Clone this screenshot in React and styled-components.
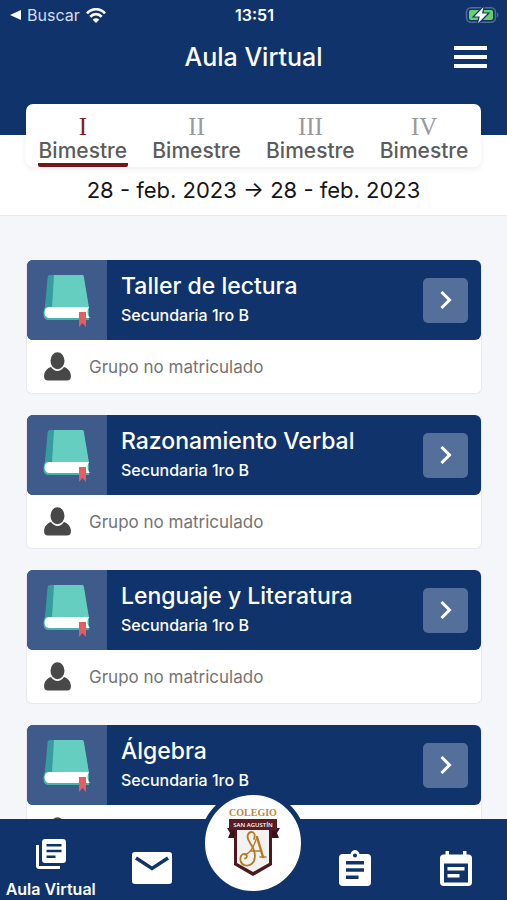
import React, { useState } from "react";
import styled, { createGlobalStyle, ThemeProvider } from "styled-components";

const theme = {
  navy: "#11336b",
  navySoft: "#3f5b8c",
  button: "#536f9a",
  maroon: "#701a20",
  ink: "#161616",
  grey: "#5c5c5c",
  page: "#f4f6fa",
  line: "#e6e9ee",
};

const GlobalStyle = createGlobalStyle`
  *, *::before, *::after { box-sizing: border-box; }
  body { margin: 0; font-family: Inter, "Liberation Sans", sans-serif; }
  button { font: inherit; border: 0; background: none; padding: 0; cursor: pointer; }
  h1, h2, p { margin: 0; font-weight: 500; }
  svg { display: block; flex: none; }
`;

const Screen = styled.div`
  display: flex;
  flex-direction: column;
  height: 100vh;
  background: ${(p) => p.theme.page};
`;

const Header = styled.header`
  flex: none;
  height: 135px;
  color: #fff;
  background: ${(p) => p.theme.navy};
`;

const StatusBar = styled.div`
  display: grid;
  grid-template-columns: 1fr auto 1fr;
  align-items: center;
  height: 30px;
  padding: 0 8px 0 10px;
  font-size: 16px;
  line-height: 20px;
`;

const BackLink = styled.a`
  display: flex;
  align-items: center;
  gap: 6px;
  color: #d5dded;
  text-decoration: none;
`;

const Clock = styled.time`
  font-weight: 600;
`;

const BatterySlot = styled.div`
  display: flex;
  justify-content: flex-end;
`;

const TitleBar = styled.div`
  display: grid;
  grid-template-columns: 1fr auto 1fr;
  align-items: center;
  height: 54px;
  padding: 0 20px;
`;

const Title = styled.h1`
  grid-column: 2;
  font-size: 25px;
  line-height: 32px;
`;

const MenuButton = styled.button`
  justify-self: end;
  color: #fff;
`;

const Period = styled.section`
  flex: none;
  height: 81px;
  padding: 0 26px;
  background: #fff;
  border-bottom: 1px solid ${(p) => p.theme.line};
`;

const Tabs = styled.div`
  display: grid;
  grid-template-columns: repeat(4, 1fr);
  height: 63px;
  margin-top: -31px;
  background: #fff;
  border-radius: 7px;
  box-shadow: 0 2px 6px rgba(0, 0, 0, 0.07);
`;

const Tab = styled.button`
  display: flex;
  flex-direction: column;
  align-items: center;
  padding-top: 11px;
  color: ${(p) => p.theme.grey};
`;

const Numeral = styled.span`
  font-family: "Liberation Serif", serif;
  font-size: 25px;
  line-height: 24px;
  color: ${(p) => (p.$active ? "#7d1d26" : "#9a9a9a")};
`;

const TabLabel = styled.span`
  padding: 0 1px;
  font-size: 21px;
  font-weight: 500;
  line-height: 24px;
  border-bottom: 4px solid ${(p) => (p.$active ? p.theme.maroon : "transparent")};
  border-radius: 2px;
`;

const DateRange = styled.p`
  padding-top: 8px;
  font-size: 22px;
  font-weight: 400;
  line-height: 30px;
  text-align: center;
  white-space: nowrap;
  color: ${(p) => p.theme.ink};
`;

const CourseList = styled.main`
  flex: 1;
  min-height: 0;
  display: flex;
  flex-direction: column;
  gap: 21px;
  padding: 44px 25px 24px 26px;
  overflow-y: auto;
  scrollbar-width: none;
`;

const Card = styled.article`
  flex: none;
  background: #fff;
  border: 1px solid ${(p) => p.theme.line};
  border-top: 0;
  border-radius: 6px;
`;

const CardHead = styled.div`
  display: flex;
  align-items: center;
  height: 80px;
  padding-right: 13px;
  overflow: hidden;
  color: #fff;
  background: ${(p) => p.theme.navy};
  border-radius: 6px;
`;

const Cover = styled.div`
  display: flex;
  align-items: center;
  justify-content: center;
  width: 80px;
  height: 80px;
  background: ${(p) => p.theme.navySoft};
`;

const CourseText = styled.div`
  flex: 1;
  padding-left: 14px;
`;

const CourseName = styled.h2`
  font-size: 23px;
  line-height: 30px;
`;

const CourseGroup = styled.p`
  font-size: 16px;
  line-height: 28px;
`;

const OpenButton = styled.button`
  display: grid;
  place-items: center;
  width: 45px;
  height: 45px;
  border-radius: 5px;
  color: #fff;
  background: ${(p) => p.theme.button};
`;

const CardFoot = styled.div`
  display: flex;
  align-items: center;
  gap: 18px;
  height: 53px;
  padding-left: 17px;
  font-size: 17px;
  color: #747474;
`;

const Nav = styled.nav`
  position: relative;
  flex: none;
  display: grid;
  grid-template-columns: repeat(5, 1fr);
  height: 81px;
  background: ${(p) => p.theme.navy};
`;

const NavButton = styled.button`
  display: flex;
  flex-direction: column;
  align-items: center;
  justify-content: flex-end;
  gap: 10px;
  padding-bottom: ${(p) => (p.$active ? "1px" : "14px")};
  color: #fff;
  font-size: 16px;
  font-weight: 600;
  line-height: 20px;
  white-space: nowrap;
`;

const LogoButton = styled.button`
  position: relative;
`;

const LogoBadge = styled.span`
  position: absolute;
  left: 50%;
  bottom: 4px;
  display: grid;
  place-items: center;
  width: 106px;
  height: 106px;
  border: 5px solid ${(p) => p.theme.navy};
  border-radius: 50%;
  background: #fff;
  transform: translateX(-50%);
`;

const Wifi = () => (
  <svg width="20" height="15" viewBox="0 0 20 15" fill="none" stroke="#fff" strokeWidth="2.7">
    <path d="M1 5.3C6-.1 14-.1 19 5.3M4.3 8.8c3.4-3.6 8-3.6 11.4 0" />
    <path d="M10 15 6.7 11.7c2-1.9 4.6-1.9 6.6 0z" fill="#fff" stroke="none" />
  </svg>
);

const Battery = () => (
  <svg width="34" height="18" viewBox="0 0 34 18">
    <rect x="1.500" y="1.700" width="29" height="14.600" rx="4.500" fill="none" stroke="#536b95" strokeWidth="1.500" />
    <rect x="4" y="4" width="24" height="10" rx="2" fill="#65d169" />
    <path d="M32 6.500c1.800.8 1.800 4.200 0 5z" fill="#536b95" />
    <path d="M18.500 1 9.500 10.400h5.300L13 17.200l9.500-9.600h-5.500z" fill="#fff" stroke="#11336b" strokeWidth="2.400" paintOrder="stroke" />
  </svg>
);

const MenuIcon = () => (
  <svg width="33" height="24" viewBox="0 0 33 24" fill="currentColor">
    <path d="M0 1h33v4H0zM0 10h33v4H0zM0 19h33v4H0z" />
  </svg>
);

const Book = () => (
  <svg width="48" height="54" viewBox="0 0 48 54">
    <path d="M7 2h33l6 34v11H6c-7 0-6-8-4-13z" fill="#42b6aa" />
    <path d="M7 2h5L9 34H2L4.500 5C4.700 3 5.500 2 7 2z" fill="#369c9d" />
    <path d="M11 2h28c1 0 1.600.5 1.800 1.500L46 35H9z" fill="#65cec0" />
    <path d="M6 34h40c-2 3-2 8 1 11H6c-6 0-6-11 0-11z" fill="#fff" />
    <path d="M36 39h7v15l-3.500-4-3.500 4z" fill="#e75d5d" />
  </svg>
);

const Person = () => (
  <svg width="27" height="29" viewBox="0 0 27 29" fill="#484848">
    <ellipse cx="13.500" cy="8.700" rx="7" ry="8.500" />
    <path d="M7 15c-4 1.500-6.500 4-6.900 8.500C-.1 27 1.200 28.500 4 28.500h19c2.800 0 4.100-1.500 3.900-5C26.500 19 24 16.500 20 15c-3.700 5.200-9.300 5.200-13 0z" />
  </svg>
);

const Chevron = () => (
  <svg width="12" height="18" viewBox="0 0 12 18" fill="none" stroke="currentColor" strokeWidth="3">
    <path d="m1.500 1 8 8-8 8" />
  </svg>
);

const LibraryIcon = () => (
  <svg width="30" height="30" viewBox="0 0 30 30" fill="currentColor">
    <path d="M0 6h3v21h21v3H3c-1.700 0-3-1.300-3-3z" />
    <path fillRule="evenodd" d="M9 0h18c1.700 0 3 1.300 3 3v18c0 1.700-1.300 3-3 3H9c-1.700 0-3-1.300-3-3V3c0-1.700 1.300-3 3-3zm1.500 5v2.500h15V5zm0 5.700v2.500h15v-2.500zm0 5.800V19h9v-2.500z" />
  </svg>
);

const MailIcon = () => (
  <svg width="40" height="34" viewBox="0 0 40 34">
    <rect width="40" height="32" rx="3" fill="currentColor" />
    <path d="m4 6 16 10.500L36 6" fill="none" stroke="#11336b" strokeWidth="3.500" />
  </svg>
);

const TaskIcon = () => (
  <svg width="32" height="36" viewBox="0 0 32 36" fill="currentColor">
    <path fillRule="evenodd" d="M3.500 4h8c1.500-5.300 7.500-5.300 9 0h8C30.500 4 32 5.500 32 7.500v25c0 2-1.500 3.500-3.500 3.500h-25c-2 0-3.500-1.500-3.500-3.500v-25C0 5.500 1.500 4 3.500 4zM16 3.500a2 2 0 1 0 0 4 2 2 0 0 0 0-4zM7 11v3.500h18V11zm0 7.200v3.500h18v-3.500zm0 7.200v3.500h12.500v-3.500z" />
  </svg>
);

const CalendarIcon = () => (
  <svg width="32" height="35" viewBox="0 0 32 35" fill="currentColor">
    <path fillRule="evenodd" d="M5.500 0H9v3.500h14V0h3.500v3.500h2C30.500 3.500 32 5 32 7v24.500c0 2-1.500 3.500-3.500 3.500h-25c-2 0-3.500-1.500-3.500-3.500V7c0-2 1.500-3.500 3.500-3.500h2zM4 12.500v19h24v-19z" />
    <path d="M7.500 16h17v3.500h-17zM7.500 23h12v3.500h-12z" />
  </svg>
);

const Crest = () => (
  <svg width="64" height="80" viewBox="0 0 64 80" role="img" aria-label="Colegio San Agustín">
    <text x="32" y="13" textAnchor="middle" fontFamily="Liberation Serif, serif" fontSize="10" fontWeight="700" fill="#b98a43">COLEGIO</text>
    <path d="M6 25h53l-3 5 2 5H7l2-5z" fill="#3d1319" />
    <path d="M13 25h38v37L32 73 13 62z" fill="#4d1720" />
    <path d="M16 26h32v34l-16 9-16-9z" fill="#f2f2f2" />
    <path d="M8 16h48v11H8z" fill="#571c25" />
    <text x="32" y="24" textAnchor="middle" fontFamily="Open Sans, sans-serif" fontSize="6" fontWeight="600" fill="#fff">SAN AGUSTÍN</text>
    <g fill="none" stroke="#b77b24" strokeLinecap="round">
      <path strokeWidth="1.800" d="M33 36c1.500-4 .5-7-2.500-7-4 0-5 5.500-2.500 9l4 7c3 6 2.500 13-1.500 16-4 3-10 1.500-11-3.500-.7-4 1.500-7 4.500-6.500 2.500.5 2.500 4 0 4.500" />
      <path strokeWidth="1.300" d="M24 52c5-2 9-8 11.500-17M30 48h10M39 54h6" />
      <path strokeWidth="2.400" d="m36 34 6 20" />
    </g>
  </svg>
);

const periods = ["I", "II", "III", "IV"];
const courses = ["Taller de lectura", "Razonamiento Verbal", "Lenguaje y Literatura", "Álgebra"];

function CourseCard({ name }) {
  return (
    <Card>
      <CardHead>
        <Cover><Book /></Cover>
        <CourseText>
          <CourseName>{name}</CourseName>
          <CourseGroup>Secundaria 1ro B</CourseGroup>
        </CourseText>
        <OpenButton aria-label={`Abrir ${name}`}><Chevron /></OpenButton>
      </CardHead>
      <CardFoot><Person /><span>Grupo no matriculado</span></CardFoot>
    </Card>
  );
}

export default function App() {
  const [period, setPeriod] = useState("I");
  return (
    <ThemeProvider theme={theme}>
      <GlobalStyle />
      <Screen>
        <Header>
          <StatusBar>
            <BackLink href="#buscar">
              <svg width="11" height="10" viewBox="0 0 11 10" fill="#fff"><path d="M0 5 11 0v10z" /></svg>
              Buscar
              <Wifi />
            </BackLink>
            <Clock>13:51</Clock>
            <BatterySlot><Battery /></BatterySlot>
          </StatusBar>
          <TitleBar>
            <Title>Aula Virtual</Title>
            <MenuButton aria-label="Menú"><MenuIcon /></MenuButton>
          </TitleBar>
        </Header>
        <Period>
          <Tabs role="tablist">
            {periods.map((n) => (
              <Tab key={n} role="tab" aria-selected={n === period} onClick={() => setPeriod(n)}>
                <Numeral $active={n === period}>{n}</Numeral>
                <TabLabel $active={n === period}>Bimestre</TabLabel>
              </Tab>
            ))}
          </Tabs>
          <DateRange>28 - feb. 2023 → 28 - feb. 2023</DateRange>
        </Period>
        <CourseList>
          {courses.map((name) => <CourseCard key={name} name={name} />)}
        </CourseList>
        <Nav>
          <NavButton $active><LibraryIcon />Aula Virtual</NavButton>
          <NavButton aria-label="Mensajes"><MailIcon /></NavButton>
          <LogoButton aria-label="Inicio"><LogoBadge><Crest /></LogoBadge></LogoButton>
          <NavButton aria-label="Tareas"><TaskIcon /></NavButton>
          <NavButton aria-label="Agenda"><CalendarIcon /></NavButton>
        </Nav>
      </Screen>
    </ThemeProvider>
  );
}
